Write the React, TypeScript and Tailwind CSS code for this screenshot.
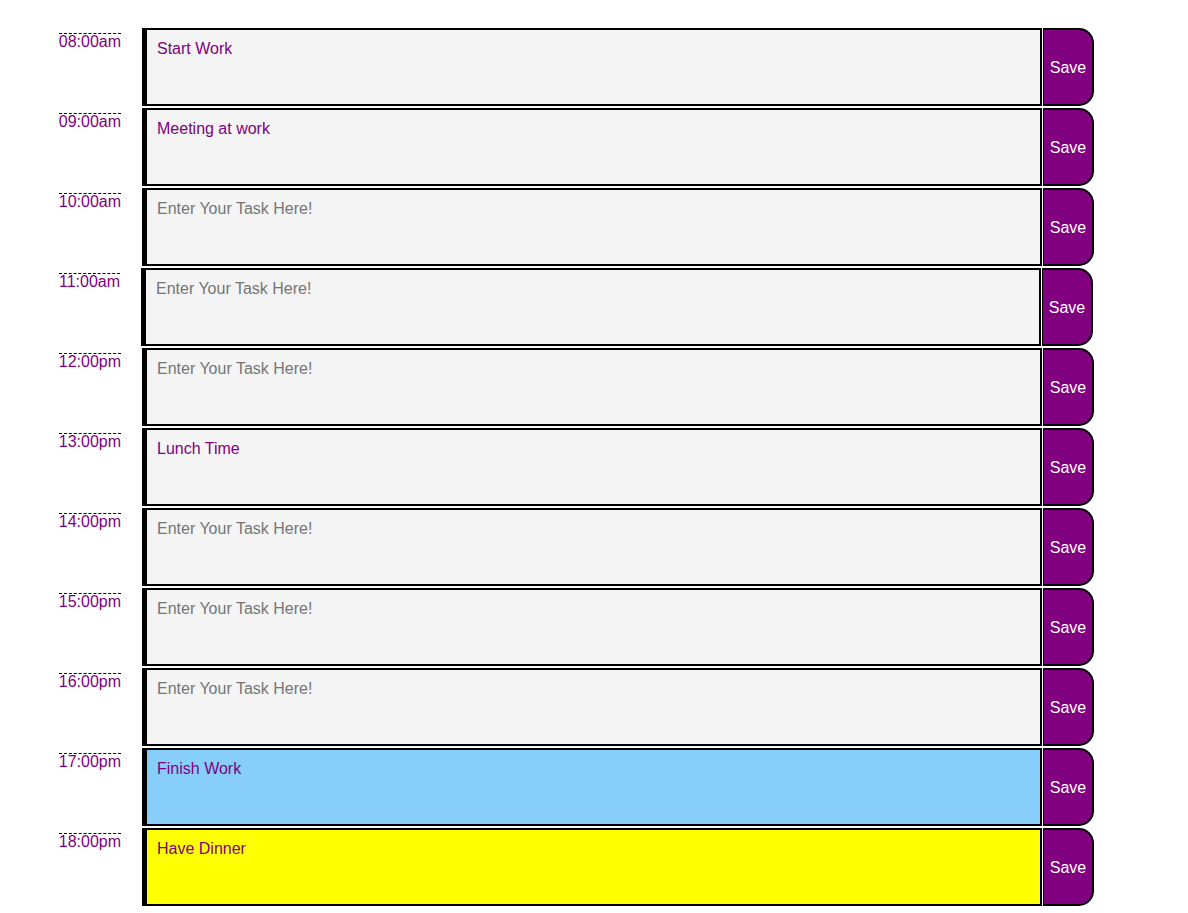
import { useState } from 'react';

type Slot = {
    hour: string;
    task: string;
    tone: 'past' | 'present' | 'future';
    nudge?: boolean;
};

/** Background for each time block state. */
const TONE_BG: Record<Slot['tone'], string> = {
    past: 'bg-[#f4f4f4]',
    present: 'bg-[#87cefa]',
    future: 'bg-[#ffff00]',
};

const SLOTS: Slot[] = [
    { hour: '08:00am', task: 'Start Work', tone: 'past' },
    { hour: '09:00am', task: 'Meeting at work', tone: 'past' },
    { hour: '10:00am', task: '', tone: 'past' },
    { hour: '11:00am', task: '', tone: 'past', nudge: true },
    { hour: '12:00pm', task: '', tone: 'past' },
    { hour: '13:00pm', task: 'Lunch Time', tone: 'past' },
    { hour: '14:00pm', task: '', tone: 'past' },
    { hour: '15:00pm', task: '', tone: 'past' },
    { hour: '16:00pm', task: '', tone: 'past' },
    { hour: '17:00pm', task: 'Finish Work', tone: 'present' },
    { hour: '18:00pm', task: 'Have Dinner', tone: 'future' },
];

function TimeBlock({ slot }: { slot: Slot }) {
    const [text, setText] = useState(slot.task);

    return (
        <div className={`mb-[2px] flex h-[78px] ${slot.nudge ? '-ml-px' : ''}`}>
            {/* Hour label */}
            <div className="flex w-[142px] shrink-0 justify-end pr-[21px]">
                <span className="mt-[5px] h-fit border-t border-dashed border-black text-base leading-none text-[#800080]">
                    {slot.hour}
                </span>
            </div>

            {/* Task entry */}
            <textarea
                value={text}
                onChange={(e) => setText(e.target.value)}
                placeholder="Enter Your Task Here!"
                className={`h-[78px] w-[900px] resize-none border-2 border-l-[5px] border-black pl-[10px] pt-[7px] font-['Liberation_Sans',Arial,sans-serif] text-base text-[#800080] outline-none placeholder:text-[#757575] ${TONE_BG[slot.tone]}`}
            />

            {/* Save button */}
            <button className="ml-px h-[78px] w-[51px] shrink-0 rounded-r-[15px] border-2 border-l border-black bg-[#800080] pt-[2px] font-['Liberation_Sans',Arial,sans-serif] text-base text-white">
                Save
            </button>
        </div>
    );
}

export default function App() {
    return (
        <div className="min-h-[913px] bg-white pt-[28px] font-['Liberation_Sans',Arial,sans-serif]">
            {SLOTS.map((slot) => (
                <TimeBlock key={slot.hour} slot={slot} />
            ))}
        </div>
    );
}
